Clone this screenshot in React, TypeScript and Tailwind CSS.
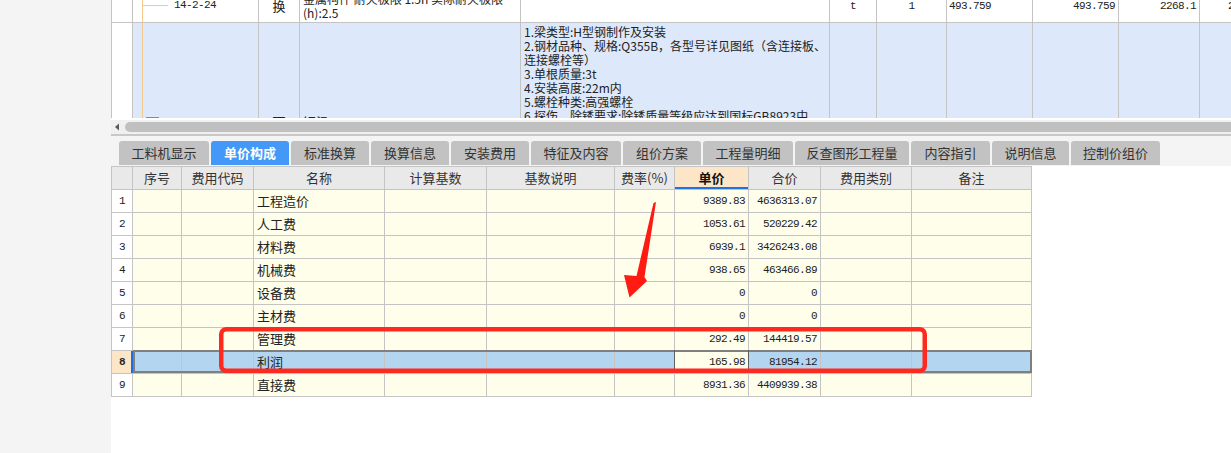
import React from 'react';

const cjk = "font-['Noto_Sans_CJK_SC',sans-serif]";
const mono = "font-['Liberation_Mono','Noto_Sans_CJK_SC',monospace] text-[11px] tracking-[-0.6px]";
const line = 'border-r border-[#c4c4c4]';

const tabs = [
    { label: '工料机显示', w: 'w-[90px]' },
    { label: '单价构成', w: 'w-[78px]', active: true },
    { label: '标准换算', w: 'w-[78px]' },
    { label: '换算信息', w: 'w-[78px]' },
    { label: '安装费用', w: 'w-[78px]' },
    { label: '特征及内容', w: 'w-[90px]' },
    { label: '组价方案', w: 'w-[78px]' },
    { label: '工程量明细', w: 'w-[90px]' },
    { label: '反查图形工程量', w: 'w-[114px]' },
    { label: '内容指引', w: 'w-[79px]' },
    { label: '说明信息', w: 'w-[77px]' },
    { label: '控制价组价', w: 'w-[89px]' },
];

const rows = [
    { no: 1, name: '工程造价', price: '9389.83', total: '4636313.07' },
    { no: 2, name: '人工费', price: '1053.61', total: '520229.42' },
    { no: 3, name: '材料费', price: '6939.1', total: '3426243.08' },
    { no: 4, name: '机械费', price: '938.65', total: '463466.89' },
    { no: 5, name: '设备费', price: '0', total: '0' },
    { no: 6, name: '主材费', price: '0', total: '0' },
    { no: 7, name: '管理费', price: '292.49', total: '144419.57' },
    { no: 8, name: '利润', price: '165.98', total: '81954.12' },
    { no: 9, name: '直接费', price: '8931.36', total: '4409939.38' },
];

const descLines = [
    '1.梁类型:H型钢制作及安装',
    '2.钢材品种、规格:Q355B，各型号详见图纸（含连接板、',
    '连接螺栓等）',
    '3.单根质量:3t',
    '4.安装高度:22m内',
    '5.螺栓种类:高强螺栓',
    '6.探伤、除锈要求:除锈质量等级应达到国标GB8923中',
    'Sa2.5级',
];

const TopGrid = () => (
    <div className="h-[118px] overflow-hidden border-l border-[#c4c4c4]">
        <div className="-mt-[10px]">
            {/* row 1 */}
            <div className="flex h-[33px] border-b border-[#c4c4c4] bg-white text-[#222]">
                <div className={`w-[21px] shrink-0 ${line}`} />
                <div className={`w-[126px] shrink-0 relative ${line}`}>
                    <div className="absolute left-[9px] top-0 bottom-0 w-px bg-[#f5c88c]" />
                    <div className="absolute left-[9px] top-[15px] w-[26px] h-px bg-[#f5c88c]" />
                    <div className={`pl-[41px] pt-[8px] leading-[14px] ${mono}`}>14-2-24</div>
                </div>
                <div className={`w-[41px] shrink-0 flex items-center justify-center text-[13px] ${cjk} ${line}`}>换</div>
                <div className={`w-[221px] shrink-0 overflow-hidden flex flex-col justify-center pl-[3px] text-[12px] leading-[14px] whitespace-nowrap ${cjk} ${line}`}>
                    <div>金属构件 耐火极限 1.5h  实际耐火极限</div>
                    <div>(h):2.5</div>
                </div>
                <div className={`w-[309px] shrink-0 ${line}`} />
                <div className={`w-[47px] shrink-0 flex items-center justify-center ${mono} ${line}`}>t</div>
                <div className={`w-[70px] shrink-0 flex items-center justify-center ${mono} ${line}`}>1</div>
                <div className={`w-[86px] shrink-0 flex items-center pl-[2px] ${mono} ${line}`}>493.759</div>
                <div className={`w-[86px] shrink-0 flex items-center justify-end pr-[3px] ${mono} ${line}`}>493.759</div>
                <div className={`w-[81px] shrink-0 flex items-center justify-end pr-[3px] ${mono} ${line}`}>2268.1</div>
                <div className={`flex-1 flex items-center pl-[28px] overflow-hidden whitespace-nowrap ${mono}`}>2268.1</div>
            </div>
            {/* row 2 */}
            <div className="flex h-[200px] text-[#222]">
                <div className={`w-[21px] shrink-0 bg-white ${line}`} />
                <div className={`w-[126px] shrink-0 relative bg-[#dde9fb] ${line}`}>
                    <div className="absolute left-[9px] top-0 bottom-0 w-px bg-[#f5c88c]" />
                    <div className="absolute left-[13px] top-[94px] w-[13px] h-[13px] border border-[#8a8a8a] bg-white" />
                </div>
                <div className={`w-[41px] shrink-0 bg-[#dde9fb] pt-[92px] text-center text-[13px] leading-[14px] ${cjk} ${line}`}>项</div>
                <div className={`w-[221px] shrink-0 bg-[#dde9fb] pt-[92px] pl-[3px] text-[13px] leading-[14px] ${cjk} ${line}`}>钢梁</div>
                <div className={`w-[309px] shrink-0 bg-[#dde9fb] pt-[2px] pl-[3px] text-[12px] leading-[14px] whitespace-nowrap overflow-hidden ${cjk} ${line}`}>
                    {descLines.map((l) => (
                        <div key={l}>{l}</div>
                    ))}
                </div>
                <div className={`w-[47px] shrink-0 bg-[#dde9fb] ${line}`} />
                <div className={`w-[70px] shrink-0 bg-[#dde9fb] ${line}`} />
                <div className={`w-[86px] shrink-0 bg-[#dde9fb] ${line}`} />
                <div className={`w-[86px] shrink-0 bg-[#dde9fb] ${line}`} />
                <div className={`w-[81px] shrink-0 bg-[#dde9fb] ${line}`} />
                <div className="flex-1 bg-[#dde9fb]" />
            </div>
        </div>
    </div>
);

const ScrollBar = () => (
    <div className="h-[18px] bg-white pt-[2px] border-b-2 border-[#c8c8c8] overflow-hidden">
        <div className="h-[14px] bg-[#f0f0f0] flex items-center">
            <svg width="14" height="14" viewBox="0 0 14 14" className="shrink-0">
                <polygon points="8,3.5 4,7 8,10.5" fill="#5a5a5a" />
            </svg>
            <div className="flex-1 h-[10px] rounded-full bg-[#c0c0c0] -mr-[20px]" />
        </div>
    </div>
);

const TabBar = () => (
    <div className={`h-[30px] bg-[#f4f4f4] flex items-start gap-[2px] pt-[5px] pl-[8px] ${cjk}`}>
        {tabs.map((t) => (
            <div
                key={t.label}
                className={`${t.w} h-[24px] shrink-0 rounded-t-[3px] flex items-center justify-center text-[13px] ${
                    t.active ? 'bg-[#4499f8] text-white font-bold' : 'bg-[#c2c2c2] text-[#333]'
                }`}
            >
                {t.label}
            </div>
        ))}
    </div>
);

const CostGrid = () => (
    <div className={`w-[921px] border-l border-[#c4c4c4] text-[#222] ${cjk}`}>
        <div className="flex h-[24px] border-y border-[#c4c4c4] bg-[#e9e9e9] text-[13px] text-[#333]">
            <div className={`w-[21px] shrink-0 ${line}`} />
            <div className={`w-[49px] shrink-0 flex items-center justify-center ${line}`}>序号</div>
            <div className={`w-[72px] shrink-0 flex items-center justify-center ${line}`}>费用代码</div>
            <div className={`w-[131px] shrink-0 flex items-center justify-center ${line}`}>名称</div>
            <div className={`w-[102px] shrink-0 flex items-center justify-center ${line}`}>计算基数</div>
            <div className={`w-[128px] shrink-0 flex items-center justify-center ${line}`}>基数说明</div>
            <div className={`w-[60px] shrink-0 flex items-center justify-center ${line}`}>费率(%)</div>
            <div className={`w-[74px] shrink-0 flex items-center justify-center bg-[#fde6c8] font-bold text-[#111] shadow-[inset_0_-2px_0_#1a73e8] ${line}`}>单价</div>
            <div className={`w-[72px] shrink-0 flex items-center justify-center ${line}`}>合价</div>
            <div className={`w-[91px] shrink-0 flex items-center justify-center ${line}`}>费用类别</div>
            <div className={`w-[120px] shrink-0 flex items-center justify-center ${line}`}>备注</div>
        </div>
        {rows.map((r) => {
            const sel = r.no === 8;
            const cell = sel ? 'bg-[#b4d5f0]' : 'bg-[#fffeea]';
            return (
                <div key={r.no} className="relative flex h-[23px] border-b border-[#c4c4c4]">
                    <div
                        className={`w-[21px] shrink-0 flex items-center justify-center ${mono} ${
                            sel ? 'bg-[#fde6c8] font-bold' : 'bg-white'
                        } ${line}`}
                    >
                        {r.no}
                    </div>
                    <div className={`w-[49px] shrink-0 ${cell} ${line}`} />
                    <div className={`w-[72px] shrink-0 ${cell} ${line}`} />
                    <div className={`w-[131px] shrink-0 flex items-center pl-[3px] text-[13px] ${cell} ${line}`}>{r.name}</div>
                    <div className={`w-[102px] shrink-0 ${cell} ${line}`} />
                    <div className={`w-[128px] shrink-0 ${cell} ${line}`} />
                    <div className={`w-[60px] shrink-0 ${cell} ${line}`} />
                    <div className={`w-[74px] shrink-0 flex items-center justify-end pr-[3px] bg-[#fffeea] ${mono} ${line}`}>{r.price}</div>
                    <div className={`w-[72px] shrink-0 flex items-center justify-end pr-[3px] ${cell} ${mono} ${line}`}>{r.total}</div>
                    <div className={`w-[91px] shrink-0 ${cell} ${line}`} />
                    <div className={`w-[120px] shrink-0 ${cell} ${line}`} />
                    {sel && (
                        <>
                            <div className="absolute left-[21px] right-0 -top-px bottom-0 border-2 border-[#7f7f7f]" />
                            <div className="absolute left-[562px] w-[75px] -top-px bottom-0 border-x border-[#606060]" />
                            <div className="absolute left-[19px] w-[2px] top-0 bottom-0 bg-[#1a6fe6]" />
                        </>
                    )}
                </div>
            );
        })}
    </div>
);

const App = () => {
    return (
        <div className="relative flex w-[1231px] h-[453px] overflow-hidden bg-white">
            <div className="w-[111px] shrink-0 bg-[#f4f4f4]" />
            <div className="flex-1 min-w-0 flex flex-col">
                <TopGrid />
                <ScrollBar />
                <TabBar />
                <CostGrid />
            </div>
            {/* annotation marks */}
            <svg className="absolute left-0 top-0 pointer-events-none" width="1231" height="453">
                <rect x="221.25" y="329.25" width="703.5" height="41.5" rx="5" fill="none" stroke="#fe2a20" strokeWidth="4.5" />
                <polygon points="656,202 644.5,277 647,281 629.5,297.5 624,275 636.5,276 653.5,203" fill="#ff1a12" />
            </svg>
        </div>
    );
};

export default App;
